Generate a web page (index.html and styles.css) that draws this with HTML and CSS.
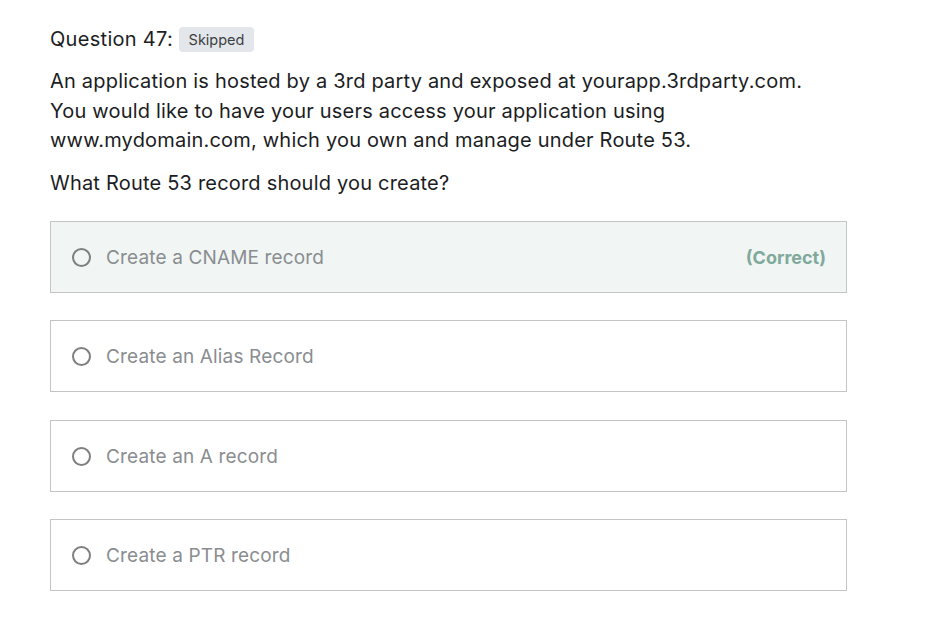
FILE: index.html
```html
<!DOCTYPE html>
<html lang="en">
<head>
<meta charset="utf-8">
<title>Question 47</title>
<link rel="stylesheet" href="styles.css">
</head>
<body>
<div class="page">
  <div class="q-header">
    <span class="q-title">Question 47:</span>
    <span class="badge">Skipped</span>
  </div>
  <div class="q-body">
    <p>An application is hosted by a 3rd party and exposed at yourapp.3rdparty.com. You would like to have your users access your application using www.mydomain.com, which you own and manage under Route 53.</p>
    <p>What Route 53 record should you create?</p>
  </div>
  <ul class="options">
    <li class="option correct">
      <span class="radio"></span>
      <span class="label">Create a CNAME record</span>
      <span class="result">(Correct)</span>
    </li>
    <li class="option">
      <span class="radio"></span>
      <span class="label">Create an Alias Record</span>
    </li>
    <li class="option">
      <span class="radio"></span>
      <span class="label">Create an A record</span>
    </li>
    <li class="option">
      <span class="radio"></span>
      <span class="label">Create a PTR record</span>
    </li>
  </ul>
</div>
</body>
</html>
```

FILE: styles.css
```css
html, body {
  margin: 0;
  padding: 0;
  background: #ffffff;
}

body {
  font-family: "Inter", "Liberation Sans", sans-serif;
  color: #1c1d1f;
}

.page {
  width: 797px;
  padding: 26px 0 0 50px;
}

.q-header {
  display: flex;
  align-items: center;
  height: 26px;
}

.q-title {
  font-size: 20px;
  line-height: 26px;
  letter-spacing: 0.3px;
}

.badge {
  margin-left: 6px;
  height: 25px;
  padding: 0 9.5px;
  display: inline-flex;
  align-items: center;
  background: #e3e6ea;
  color: #3d3f42;
  border-radius: 4px;
  font-size: 14.5px;
}

.q-body {
  margin-top: 15px;
  width: 765px;
}

.q-body p {
  margin: 0 0 13.5px;
  font-size: 20px;
  line-height: 29.5px;
  letter-spacing: 0.2px;
}

.q-body p:last-child {
  margin-bottom: 0;
}

.options {
  list-style: none;
  margin: 22px 0 0;
  padding: 0;
  display: flex;
  flex-direction: column;
  gap: 27.5px;
}

.option {
  box-sizing: border-box;
  height: 72px;
  border: 1px solid #c2c4c6;
  display: flex;
  align-items: center;
  padding: 1px 20px 0 21px;
  color: #8a8d90;
  font-size: 19px;
  letter-spacing: 0.15px;
}

.option.correct {
  background: #f1f5f4;
}

.radio {
  box-sizing: border-box;
  width: 19px;
  height: 19px;
  border: 2px solid #7d7f81;
  border-radius: 50%;
  margin-right: 15px;
  flex: none;
}

.label {
  flex: 1;
}

.result {
  font-weight: 700;
  font-size: 18px;
  letter-spacing: 0;
  color: #7fa99b;
}
```
